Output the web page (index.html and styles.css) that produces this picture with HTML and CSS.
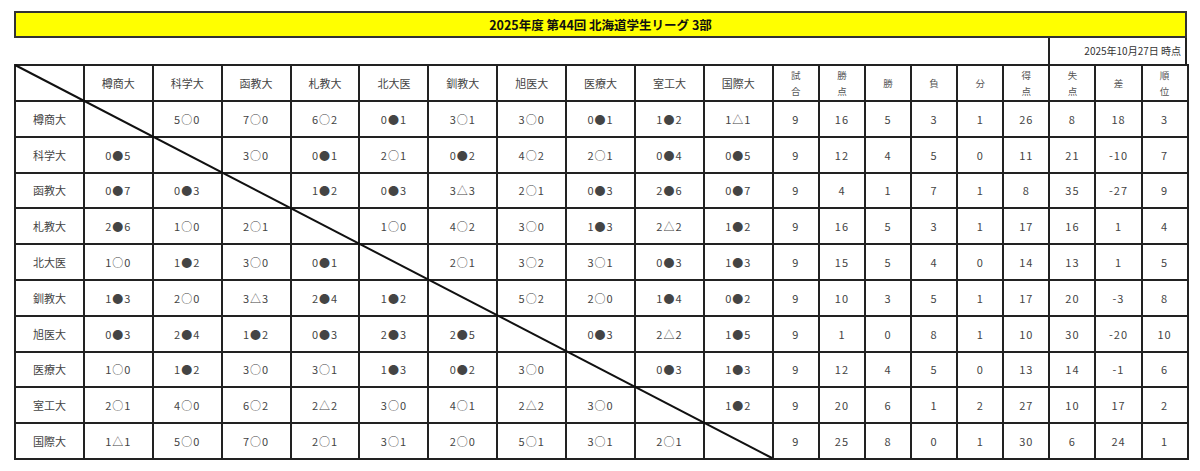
FILE: index.html
```html
<!DOCTYPE html>
<html lang="ja">
<head>
<meta charset="utf-8">
<title>2025年度 第44回 北海道学生リーグ 3部</title>
<link rel="stylesheet" href="styles.css">
</head>
<body>
<div class="page">
  <div class="title">2025年度 第44回 北海道学生リーグ 3部</div>
  <div class="daterow"><div class="date">2025年10月27日 時点</div></div>
  <div class="grid">
    <table class="league">
      <colgroup>
        <col class="c-team"><col class="c-team"><col class="c-team"><col class="c-team"><col class="c-team"><col class="c-team"><col class="c-team"><col class="c-team"><col class="c-team"><col class="c-team"><col class="c-team">
        <col class="c-stat"><col class="c-stat"><col class="c-stat"><col class="c-stat"><col class="c-stat"><col class="c-stat"><col class="c-stat"><col class="c-stat"><col class="c-stat">
      </colgroup>
      <thead>
        <tr class="head">
          <th></th>
          <th>樽商大</th><th>科学大</th><th>函教大</th><th>札教大</th><th>北大医</th><th>釧教大</th><th>旭医大</th><th>医療大</th><th>室工大</th><th>国際大</th>
          <th class="st">試<br>合</th><th class="st">勝<br>点</th><th class="st">勝</th><th class="st">負</th><th class="st">分</th><th class="st">得<br>点</th><th class="st">失<br>点</th><th class="st">差</th><th class="st">順<br>位</th>
        </tr>
      </thead>
      <tbody>
        <tr><th>樽商大</th><td></td><td>5○0</td><td>7○0</td><td>6○2</td><td>0●1</td><td>3○1</td><td>3○0</td><td>0●1</td><td>1●2</td><td>1△1</td><td>9</td><td>16</td><td>5</td><td>3</td><td>1</td><td>26</td><td>8</td><td>18</td><td>3</td></tr>
        <tr><th>科学大</th><td>0●5</td><td></td><td>3○0</td><td>0●1</td><td>2○1</td><td>0●2</td><td>4○2</td><td>2○1</td><td>0●4</td><td>0●5</td><td>9</td><td>12</td><td>4</td><td>5</td><td>0</td><td>11</td><td>21</td><td>-10</td><td>7</td></tr>
        <tr><th>函教大</th><td>0●7</td><td>0●3</td><td></td><td>1●2</td><td>0●3</td><td>3△3</td><td>2○1</td><td>0●3</td><td>2●6</td><td>0●7</td><td>9</td><td>4</td><td>1</td><td>7</td><td>1</td><td>8</td><td>35</td><td>-27</td><td>9</td></tr>
        <tr><th>札教大</th><td>2●6</td><td>1○0</td><td>2○1</td><td></td><td>1○0</td><td>4○2</td><td>3○0</td><td>1●3</td><td>2△2</td><td>1●2</td><td>9</td><td>16</td><td>5</td><td>3</td><td>1</td><td>17</td><td>16</td><td>1</td><td>4</td></tr>
        <tr><th>北大医</th><td>1○0</td><td>1●2</td><td>3○0</td><td>0●1</td><td></td><td>2○1</td><td>3○2</td><td>3○1</td><td>0●3</td><td>1●3</td><td>9</td><td>15</td><td>5</td><td>4</td><td>0</td><td>14</td><td>13</td><td>1</td><td>5</td></tr>
        <tr><th>釧教大</th><td>1●3</td><td>2○0</td><td>3△3</td><td>2●4</td><td>1●2</td><td></td><td>5○2</td><td>2○0</td><td>1●4</td><td>0●2</td><td>9</td><td>10</td><td>3</td><td>5</td><td>1</td><td>17</td><td>20</td><td>-3</td><td>8</td></tr>
        <tr><th>旭医大</th><td>0●3</td><td>2●4</td><td>1●2</td><td>0●3</td><td>2●3</td><td>2●5</td><td></td><td>0●3</td><td>2△2</td><td>1●5</td><td>9</td><td>1</td><td>0</td><td>8</td><td>1</td><td>10</td><td>30</td><td>-20</td><td>10</td></tr>
        <tr><th>医療大</th><td>1○0</td><td>1●2</td><td>3○0</td><td>3○1</td><td>1●3</td><td>0●2</td><td>3○0</td><td></td><td>0●3</td><td>1●3</td><td>9</td><td>12</td><td>4</td><td>5</td><td>0</td><td>13</td><td>14</td><td>-1</td><td>6</td></tr>
        <tr><th>室工大</th><td>2○1</td><td>4○0</td><td>6○2</td><td>2△2</td><td>3○0</td><td>4○1</td><td>2△2</td><td>3○0</td><td></td><td>1●2</td><td>9</td><td>20</td><td>6</td><td>1</td><td>2</td><td>27</td><td>10</td><td>17</td><td>2</td></tr>
        <tr><th>国際大</th><td>1△1</td><td>5○0</td><td>7○0</td><td>2○1</td><td>3○1</td><td>2○0</td><td>5○1</td><td>3○1</td><td>2○1</td><td></td><td>9</td><td>25</td><td>8</td><td>0</td><td>1</td><td>30</td><td>6</td><td>24</td><td>1</td></tr>
      </tbody>
    </table>
    <svg class="diag" width="760" height="396" viewBox="0 0 760 396" aria-hidden="true">
      <line x1="1" y1="1" x2="758" y2="394" stroke="#111" stroke-width="2"/>
    </svg>
  </div>
</div>
</body>
</html>
```
FILE: styles.css
```css
body {
  margin: 0;
  background: #fff;
  font-family: "Noto Sans CJK JP", "Noto Sans", sans-serif;
  color: #333;
}

.page {
  padding: 11px 0 0 14px;
  width: 1173px;
}

.title {
  box-sizing: border-box;
  height: 27px;
  border: 2px solid #333;
  background: #ffff00;
  display: flex;
  align-items: center;
  justify-content: center;
  font-weight: bold;
  font-size: 12.5px;
  color: #111;
}

.daterow {
  display: flex;
  justify-content: flex-end;
}

.date {
  box-sizing: border-box;
  width: 139px;
  height: 26px;
  border-left: 2px solid #222;
  border-right: 2px solid #222;
  font-size: 10px;
  line-height: 26px;
  text-align: right;
  padding-right: 4px;
  color: #333;
}

.grid {
  position: relative;
}

.league {
  border-collapse: collapse;
  table-layout: fixed;
  width: 1173px;
}

.c-team {
  width: 68.9px;
}

.c-stat {
  width: 46.1px;
}

.league th,
.league td {
  border: 2px solid #222;
  padding: 0;
  text-align: center;
  vertical-align: middle;
  font-weight: normal;
  font-size: 11px;
  color: #444;
  white-space: nowrap;
}

.league td {
  letter-spacing: 1px;
}

.league .head {
  height: 36px;
}

.league tbody tr {
  height: 35.8px;
}

.league .st {
  font-size: 9.5px;
  line-height: 16px;
  color: #555;
}

.diag {
  position: absolute;
  left: 0;
  top: 0;
  pointer-events: none;
}
```
